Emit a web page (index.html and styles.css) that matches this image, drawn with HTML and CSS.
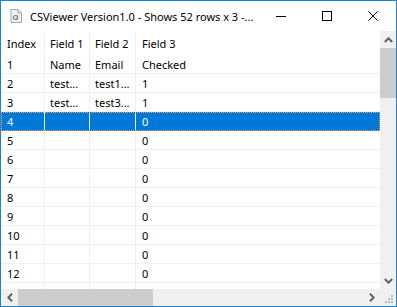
FILE: index.html
```html
<!DOCTYPE html>
<html lang="en">
<head>
    <meta charset="UTF-8">
    <title>CSViewer</title>
    <link rel="stylesheet" href="styles.css">
</head>
<body>
    <div class="window">
        <div class="titlebar">
            <svg class="app-icon" width="16" height="16" viewBox="0 0 16 16">
                <path d="M3 1.5h7l3.5 3.5v9.5h-10.5z" fill="#f0f0f0" stroke="#a8a8a8"/>
                <path d="M10 1.5v3.5h3.5" fill="none" stroke="#a8a8a8"/>
                <circle cx="7.5" cy="9.5" r="2" fill="none" stroke="#808080" stroke-width="1.2"/>
                <path d="M9.5 7.5v4" stroke="#808080" stroke-width="1.2"/>
            </svg>
            <span class="title">CSViewer Version1.0 - Shows 52 rows x 3 -...</span>
            <div class="controls">
                <div class="ctl"><span class="min"></span></div>
                <div class="ctl"><span class="max"></span></div>
                <div class="ctl">
                    <svg width="10" height="10" viewBox="0 0 10 10"><path d="M0.5 0.5l9 9M9.5 0.5l-9 9" stroke="#000" stroke-width="1"/></svg>
                </div>
            </div>
        </div>

        <div class="content">
            <div class="grid">
                <div class="row head">
                    <div class="cell c-index">Index</div>
                    <div class="cell c-f1">Field 1</div>
                    <div class="cell c-f2">Field 2</div>
                    <div class="cell c-f3">Field 3</div>
                </div>
                <div id="rows"></div>
            </div>
            <div class="vscroll">
                <div class="arrow">
                    <svg width="9" height="6" viewBox="0 0 9 6"><path d="M0.8 5l3.7-3.7 3.7 3.7" fill="none" stroke="#606060" stroke-width="2"/></svg>
                </div>
                <div class="vthumb"></div>
                <div class="vtrack"></div>
                <div class="arrow">
                    <svg width="9" height="6" viewBox="0 0 9 6"><path d="M0.8 1l3.7 3.7 3.7-3.7" fill="none" stroke="#606060" stroke-width="2"/></svg>
                </div>
            </div>
        </div>

        <div class="hscroll">
            <div class="harrow">
                <svg width="6" height="9" viewBox="0 0 6 9"><path d="M5 0.8l-3.7 3.7 3.7 3.7" fill="none" stroke="#606060" stroke-width="2"/></svg>
            </div>
            <div class="hthumb"></div>
            <div class="htrack"></div>
            <div class="harrow">
                <svg width="6" height="9" viewBox="0 0 6 9"><path d="M1 0.8l3.7 3.7-3.7 3.7" fill="none" stroke="#606060" stroke-width="2"/></svg>
            </div>
            <div class="grip">
                <svg width="16" height="17" viewBox="0 0 16 17">
                    <g fill="#bcbcbc">
                        <rect x="11" y="6" width="2" height="2"/>
                        <rect x="8" y="9" width="2" height="2"/>
                        <rect x="11" y="9" width="2" height="2"/>
                        <rect x="5" y="12" width="2" height="2"/>
                        <rect x="8" y="12" width="2" height="2"/>
                        <rect x="11" y="12" width="2" height="2"/>
                    </g>
                </svg>
            </div>
        </div>
    </div>

    <script>
        const data = [
            ['1', 'Name', 'Email', 'Checked'],
            ['2', 'test...', 'test1...', '1'],
            ['3', 'test...', 'test3...', '1'],
            ['4', '', '', '0']
        ];
        for (let i = 5; i <= 12; i++) {
            data.push([String(i), '', '', '0']);
        }
        // next row is hidden behind the scrollbar, only its grid lines show
        data.push(['', '', '', '']);

        const classes = ['c-index', 'c-f1', 'c-f2', 'c-f3'];
        const rows = document.getElementById('rows');
        data.forEach((row, n) => {
            const div = document.createElement('div');
            div.className = 'row' + (n === 3 ? ' selected' : '');
            row.forEach((value, i) => {
                const cell = document.createElement('div');
                cell.className = 'cell ' + classes[i];
                cell.textContent = value;
                div.appendChild(cell);
            });
            rows.appendChild(div);
        });
    </script>
</body>
</html>
```

FILE: styles.css
```css
* {
    box-sizing: border-box;
    margin: 0;
    padding: 0;
}

body {
    font-family: 'Noto Sans', sans-serif;
    font-size: 11px;
    color: #000;
    background: #fff;
}

.window {
    width: 397px;
    height: 307px;
    border: 1px solid #1883d7;
    display: flex;
    flex-direction: column;
    overflow: hidden;
    background: #fff;
}

/* Title bar */
.titlebar {
    height: 30px;
    display: flex;
    align-items: center;
    flex-shrink: 0;
}

.app-icon {
    margin-left: 7px;
    margin-right: 6px;
}

.title {
    font-size: 11px;
    flex: 1;
    white-space: nowrap;
}

.controls {
    display: flex;
    height: 100%;
}

.ctl {
    width: 46px;
    height: 100%;
    display: flex;
    align-items: center;
    justify-content: center;
}

.min {
    width: 10px;
    height: 1px;
    background: #000;
}

.max {
    width: 10px;
    height: 10px;
    border: 1px solid #000;
}

/* Grid */
.content {
    height: 258px;
    display: flex;
    flex-shrink: 0;
}

.grid {
    flex: 1;
    overflow: hidden;
}

.row {
    display: flex;
    height: 19px;
    align-items: stretch;
}

.row.head {
    height: 24px;
}

.row:not(.head) .cell {
    border-bottom: 1px solid #f0f0f0;
}

.cell {
    display: flex;
    align-items: center;
    padding-left: 6px;
    border-right: 1px solid #f0f0f0;
    white-space: nowrap;
    overflow: hidden;
}

.c-index { width: 44px; }
.c-f1 { width: 45px; padding-left: 5px; }
.c-f2 { width: 46px; padding-left: 5px; }
.c-f3 { flex: 1; border-right: none; }

.row.selected {
    background: #0078d7;
    color: #fff;
    outline: 1px dotted #f2a25a;
    outline-offset: -1px;
}

.row.selected .cell {
    border-bottom-color: #0078d7;
}

/* Scrollbars */
.vscroll {
    width: 16px;
    background: #f0f0f0;
    display: flex;
    flex-direction: column;
}

.arrow {
    height: 17px;
    display: flex;
    align-items: center;
    justify-content: center;
}

.vthumb {
    height: 50px;
    background: #cdcdcd;
}

.vtrack {
    flex: 1;
}

.hscroll {
    height: 17px;
    background: #f0f0f0;
    display: flex;
    flex-shrink: 0;
}

.harrow {
    width: 17px;
    display: flex;
    align-items: center;
    justify-content: center;
}

.hthumb {
    width: 135px;
    background: #cdcdcd;
}

.htrack {
    flex: 1;
}

.grip {
    width: 16px;
}
```
